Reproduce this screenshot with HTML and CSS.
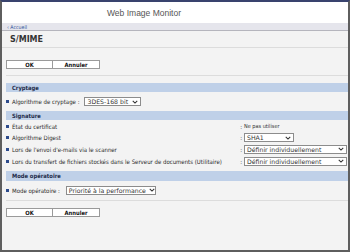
FILE: index.html
```html
<!DOCTYPE html>
<html lang="fr">
<head>
<meta charset="utf-8">
<title>S/MIME</title>
<link rel="stylesheet" href="styles.css">
</head>
<body>
<div class="frame">
  <div class="header"><span class="brand">Web Image Monitor</span></div>
  <div class="crumb"><span class="crumb-link">‹ Accueil</span></div>
  <div class="content">
    <div class="title">S/MIME</div>
    <div class="btnbar top">
      <span class="btn">OK</span><span class="btn">Annuler</span>
    </div>

    <div class="section">
      <div class="sec-head">Cryptage</div>
      <div class="row row-crypt">
        <span class="bullet"></span>
        <span class="label">Algorithme de cryptage :</span>
        <span class="select w-crypt"><span class="sel-text">3DES-168 bit</span><svg class="chev" viewBox="0 0 8 5"><path d="M1 1 L4 4 L7 1" /></svg></span>
      </div>

      <div class="sec-head">Signature</div>
      <div class="grid">
        <div class="g-label r1"><span class="bullet"></span><span class="label">État du certificat</span></div>
        <div class="g-colon r1">:</div>
        <div class="g-val r1"><span class="plain">Ne pas utiliser</span></div>

        <div class="g-label r2"><span class="bullet"></span><span class="label">Algorithme Digest</span></div>
        <div class="g-colon r2">:</div>
        <div class="g-val r2"><span class="select w-sha"><span class="sel-text">SHA1</span><svg class="chev" viewBox="0 0 8 5"><path d="M1 1 L4 4 L7 1" /></svg></span></div>

        <div class="g-label r3"><span class="bullet"></span><span class="label">Lors de l'envoi d'e-mails via le scanner</span></div>
        <div class="g-colon r3">:</div>
        <div class="g-val r3"><span class="select w-full"><span class="sel-text">Définir individuellement</span><svg class="chev" viewBox="0 0 8 5"><path d="M1 1 L4 4 L7 1" /></svg></span></div>

        <div class="g-label r4"><span class="bullet"></span><span class="label">Lors du transfert de fichiers stockés dans le Serveur de documents (Utilitaire)</span></div>
        <div class="g-colon r4">:</div>
        <div class="g-val r4"><span class="select w-full"><span class="sel-text">Définir individuellement</span><svg class="chev" viewBox="0 0 8 5"><path d="M1 1 L4 4 L7 1" /></svg></span></div>
      </div>

      <div class="sec-head mode">Mode opératoire</div>
      <div class="row row-mode">
        <span class="bullet"></span>
        <span class="label">Mode opératoire :</span>
        <span class="select w-mode"><span class="sel-text">Priorité à la performance</span><svg class="chev" viewBox="0 0 8 5"><path d="M1 1 L4 4 L7 1" /></svg></span>
      </div>
    </div>

    <div class="btnbar bottom">
      <span class="btn">OK</span><span class="btn">Annuler</span>
    </div>
  </div>
</div>
</body>
</html>
```

FILE: styles.css
```css
* { box-sizing: border-box; }
html, body { margin: 0; padding: 0; background: #ffffff; }
body {
  width: 350px;
  height: 252px;
  overflow: hidden;
  font-family: "DejaVu Sans Condensed", "DejaVu Sans", sans-serif;
  font-stretch: condensed;
  color: #222;
}
.frame {
  width: 350px;
  height: 252px;
  border: 2px solid #5e5e5e;
  border-top: 2px solid #39436e;
  display: flex;
  flex-direction: column;
  background: #f3f3f3;
}
.header {
  height: 21px;
  background: #ffffff;
  padding-left: 105px;
  display: flex;
  align-items: center;
}
.brand {
  font-family: "Liberation Sans", Arial, sans-serif;
  font-stretch: normal;
  font-size: 8.5px;
  color: #555;
  padding-top: 1px;
}
.crumb {
  height: 8px;
  background: #e5e5ec;
  border-bottom: 1px solid #b5b5bd;
  padding-left: 5px;
  display: flex;
  align-items: center;
}
.crumb-link {
  font-size: 5.2px;
  color: #2a4f9a;
}
.content {
  flex: 1;
  background: #f3f3f3;
}
.title {
  height: 17px;
  line-height: 17px;
  padding-left: 8px;
  font-family: "DejaVu Sans", sans-serif;
  font-stretch: normal;
  font-weight: bold;
  font-size: 8px;
  color: #333;
  border-bottom: 1px solid #dcdcdc;
}
.btnbar {
  display: flex;
  margin-left: 4px;
}
.btnbar.top {
  padding-top: 12px;
  padding-bottom: 6px;
  border-bottom: 1px solid #dcdcdc;
}
.btnbar.bottom {
  padding-top: 7px;
}
.btn {
  width: 47px;
  height: 9px;
  background: #ffffff;
  border: 1px solid #9a9a9a;
  font-size: 5.8px;
  font-weight: bold;
  color: #111;
  display: flex;
  align-items: center;
  justify-content: center;
}
.btn + .btn { border-left: none; width: 47px; }
.section {
  margin-left: 4px;
  padding-top: 7px;
  padding-bottom: 1px;
  border-bottom: 1px solid #dcdcdc;
}
.sec-head {
  height: 9px;
  background: #bfd0e8;
  padding-left: 6px;
  font-size: 5.8px;
  font-weight: bold;
  color: #1c2a48;
  display: flex;
  align-items: center;
}
.sec-head.mode {
  margin-top: 4px;
  height: 10px;
}
.row {
  display: flex;
  align-items: center;
  font-size: 6px;
}
.row-crypt { height: 19px; }
.row-mode { height: 18px; }
.bullet {
  width: 3px;
  height: 3px;
  background: #2d4b8c;
  margin-left: 0;
  margin-right: 3px;
  flex: none;
}
.label { color: #2a2a2a; white-space: nowrap; }
.select {
  height: 9px;
  background: #ffffff;
  border: 1px solid #8c8c8c;
  display: inline-flex;
  align-items: center;
  justify-content: space-between;
  padding: 0 2px 0 2px;
  font-family: "DejaVu Sans", sans-serif;
  font-stretch: normal;
  font-size: 6.2px;
  color: #333;
  margin-left: 2px;
  white-space: nowrap;
}
.chev {
  width: 6px;
  height: 4px;
  fill: none;
  stroke: #333;
  stroke-width: 1.4;
  flex: none;
  margin-left: 3px;
}
.w-crypt { width: 57px; margin-left: 5px; }
.w-sha { width: 50px; margin-left: 0; }
.w-full { width: 103px; margin-left: 0; }
.w-mode { width: 90px; margin-left: 6px; }
.grid {
  display: grid;
  grid-template-columns: 232px 6px 1fr;
  grid-template-rows: 12px 11px 12px 12px;
  font-size: 6px;
  align-items: center;
}
.g-label { display: flex; align-items: center; }
.g-colon { color: #333; text-align: right; padding-right: 2px; }
.g-val { display: flex; align-items: center; }
.plain { color: #333; font-size: 5.5px; }
```
